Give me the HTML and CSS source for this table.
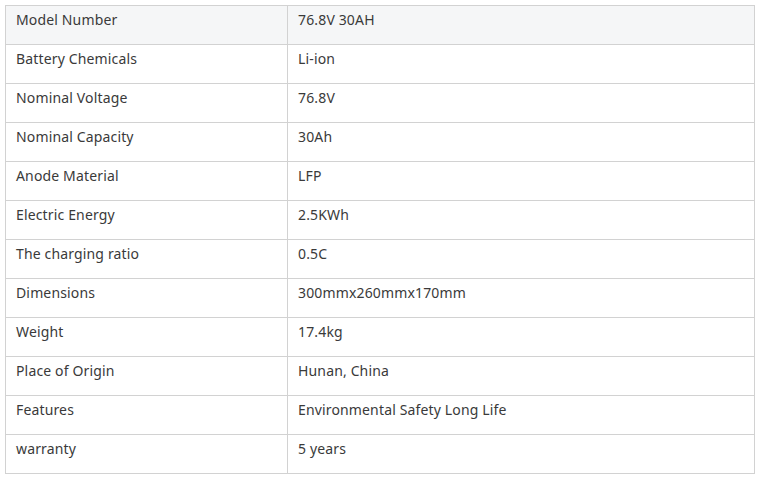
FILE: index.html
```html
<!DOCTYPE html>
<html>
<head>
<meta charset="utf-8">
<link rel="stylesheet" href="styles.css">
</head>
<body>
<table class="spec">
<tr class="head"><td class="k">Model Number</td><td class="v">76.8V 30AH</td></tr>
<tr><td class="k">Battery Chemicals</td><td class="v">Li-ion</td></tr>
<tr><td class="k">Nominal Voltage</td><td class="v">76.8V</td></tr>
<tr><td class="k">Nominal Capacity</td><td class="v">30Ah</td></tr>
<tr><td class="k">Anode Material</td><td class="v">LFP</td></tr>
<tr><td class="k">Electric Energy</td><td class="v">2.5KWh</td></tr>
<tr><td class="k">The charging ratio</td><td class="v">0.5C</td></tr>
<tr><td class="k">Dimensions</td><td class="v">300mmx260mmx170mm</td></tr>
<tr><td class="k">Weight</td><td class="v">17.4kg</td></tr>
<tr><td class="k">Place of Origin</td><td class="v">Hunan, China</td></tr>
<tr><td class="k">Features</td><td class="v">Environmental Safety Long Life</td></tr>
<tr><td class="k">warranty</td><td class="v">5 years</td></tr>
</table>
</body>
</html>
```
FILE: styles.css
```css
html, body {
  margin: 0;
  padding: 0;
  background: #ffffff;
}
body {
  padding: 5px;
  font-family: "Noto Sans", "Open Sans", sans-serif;
  font-size: 14px;
  color: #3a3a3a;
  letter-spacing: 0.15px;
}
.spec {
  border-collapse: collapse;
  width: 750px;
  table-layout: fixed;
}
.spec td {
  border: 1px solid #d2d2d2;
  height: 38px;
  box-sizing: border-box;
  padding: 4px 10px 14px;
  line-height: 20px;
  vertical-align: top;
  white-space: nowrap;
}
.spec .k {
  width: 282px;
}
.spec .head td {
  background: #f5f6f7;
}
```
